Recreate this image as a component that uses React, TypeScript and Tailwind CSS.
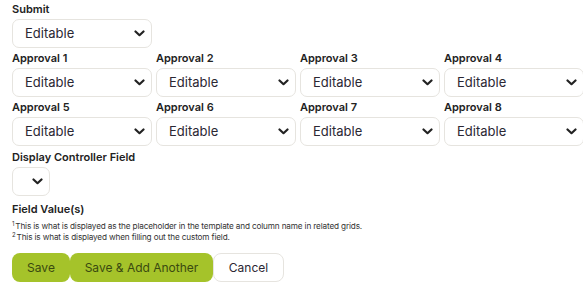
import React from "react";

function Chevron() {
  return (
    <svg width="11" height="7" viewBox="0 0 11 7" className="shrink-0">
      <path d="M1.5 1.5 L5.5 5.2 L9.5 1.5" fill="none" stroke="#222" strokeWidth="2.2" strokeLinecap="round" strokeLinejoin="round" />
    </svg>
  );
}

function Select({ value, w = "w-[140px]" }: { value?: string; w?: string }) {
  return (
    <div className={`${w} h-[29px] rounded-[7px] border border-[#e6e4df] bg-white flex items-center justify-between pl-[12px] pr-[6px]`}>
      <span className="text-[13px] text-[#2b2733]">{value}</span>
      <Chevron />
    </div>
  );
}

function Field({ label }: { label: string }) {
  return (
    <div className="flex flex-col">
      <div className="h-[20px] flex items-center text-[11px] font-semibold text-[#222]">{label}</div>
      <Select value="Editable" />
    </div>
  );
}

export default function App() {
  return (
    <div className="w-[583px] h-[286px] bg-white pl-[12px] pt-0 overflow-hidden" style={{ fontFamily: "Inter, 'Noto Sans', sans-serif" }}>
      <div className="flex flex-col -mt-[1px]">
        <Field label="Submit" />
        <div className="grid grid-cols-[140px_140px_140px_140px] gap-x-[4px]">
          {[1, 2, 3, 4, 5, 6, 7, 8].map((n) => (
            <Field key={n} label={`Approval ${n}`} />
          ))}
        </div>
        <div className="h-[20px] mt-[1px] flex items-center text-[11px] font-semibold text-[#222]">Display Controller Field</div>
        <Select w="w-[38px]" />
        <div className="h-[20px] mt-[3px] flex items-center text-[11px] font-semibold text-[#222]">Field Value(s)</div>
        <div className="mt-[2px] text-[8.2px] leading-[11px] text-[#333] tracking-[-0.15px]">
          <div><sup className="text-[6px] mr-[1px]">1</sup>This is what is displayed as the placeholder in the template and column name in related grids.</div>
          <div><sup className="text-[6px] mr-[1px]">2</sup>This is what is displayed when filling out the custom field.</div>
        </div>
        <div className="flex mt-[10px]">
          <button className="h-[29px] w-[58px] rounded-[8px] bg-[#a5c32a] text-[12px] text-[#3a4a10]">Save</button>
          <button className="h-[29px] w-[143px] rounded-[8px] bg-[#a5c32a] text-[12px] text-[#3a4a10]">Save &amp; Add Another</button>
          <button className="h-[29px] w-[71px] rounded-[8px] border border-[#e6e4df] bg-white text-[12px] text-[#2b2733]">Cancel</button>
        </div>
      </div>
    </div>
  );
}
